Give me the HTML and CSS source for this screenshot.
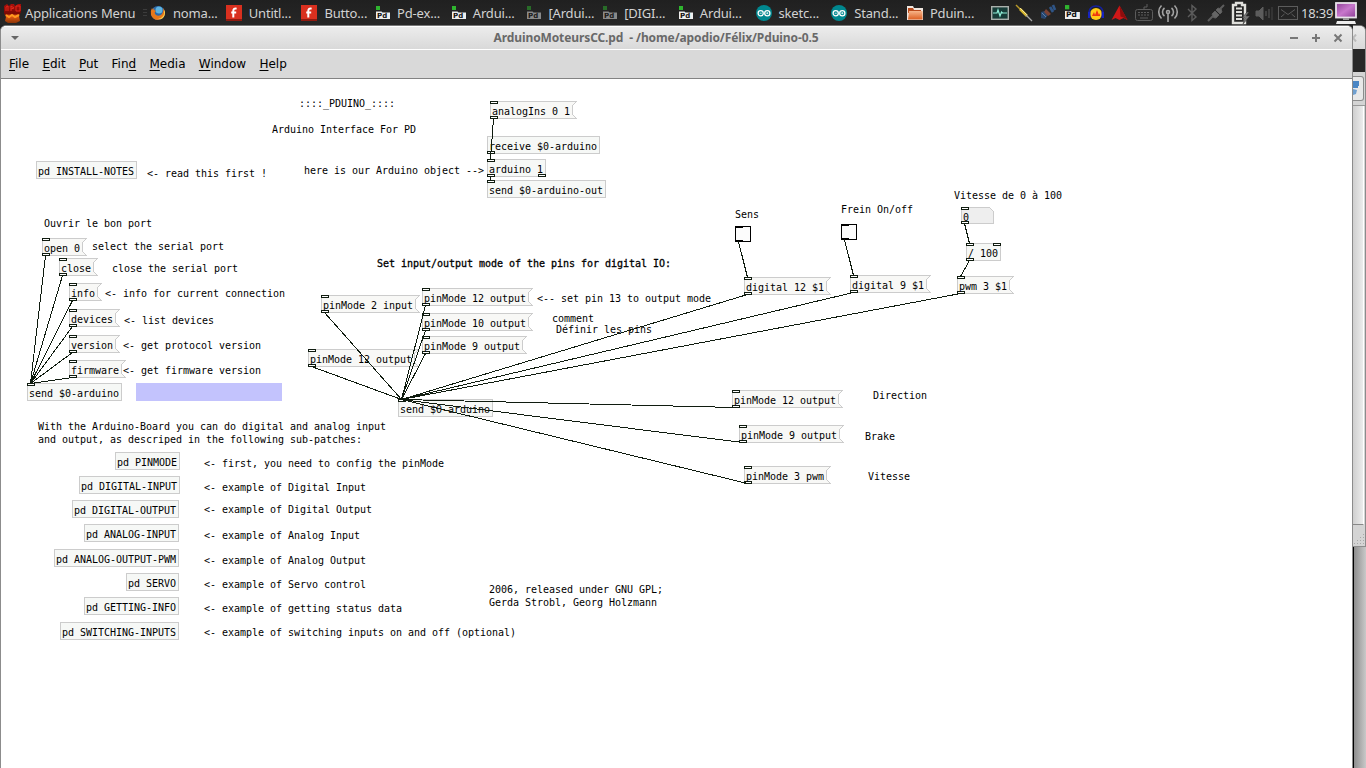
FILE: index.html
```html
<!DOCTYPE html>
<html lang="fr">
<head>
<meta charset="utf-8">
<title>ArduinoMoteursCC.pd</title>
<link rel="stylesheet" href="styles.css">
</head>
<body>
<svg class="defs" width="0" height="0" aria-hidden="true">
  <defs>
    <linearGradient id="screen-fill" x1="0" y1="0" x2="1" y2="1"><stop offset="0" stop-color="#8e3f96"/><stop offset=".5" stop-color="#c878cc"/><stop offset="1" stop-color="#8b3d95"/></linearGradient>
    <linearGradient id="folder-fill" x1="0" y1="0" x2="0" y2="1"><stop offset="0" stop-color="#f7b58a"/><stop offset="1" stop-color="#dd5f22"/></linearGradient>
    <linearGradient id="flame" x1="0" y1="0" x2="0" y2="1"><stop offset="0" stop-color="#a80f0a"/><stop offset=".5" stop-color="#7c0a05"/><stop offset=".65" stop-color="#e85a10"/><stop offset="1" stop-color="#8a3508"/></linearGradient>
    <symbol id="i-fritz" viewBox="0 0 16 16"><rect width="16" height="16" fill="#d9301f"/><rect y="14" width="16" height="2" fill="#8f1a10"/><path d="M10.600 3.800Q7.300 2.800 7.300 6v6.600M5.200 7.600h5" fill="none" stroke="#fff" stroke-width="2"/></symbol>
    <symbol id="i-pd" viewBox="0 0 16 16"><rect x="0" y="1" width="4" height="4" fill="#2fb52f"/><path d="M0 6.500h5.500l1 1H14V14H0z" fill="#eee"/><text x="1" y="12.600" class="pd-mark">Pd</text></symbol>
    <symbol id="i-arduino" viewBox="0 0 16 16"><circle cx="8" cy="8" r="8" fill="#00878f"/><circle cx="4.700" cy="8.200" r="2.600" fill="none" stroke="#fff" stroke-width="1.300"/><circle cx="11.300" cy="8.200" r="2.600" fill="none" stroke="#fff" stroke-width="1.300"/><path d="M3.700 8.200h2M10.300 8.200h2M11.300 7.200v2" stroke="#fff" stroke-width=".8"/></symbol>
    <symbol id="i-folder" viewBox="0 0 16 16"><path d="M0 1h6l1 2h9v12H0z" fill="#efe6df"/><path d="M1 3h5l1 2h7v3H1z" fill="#b94a1c"/><path d="M2 6h13.500v8.500H1z" fill="url(#folder-fill)"/></symbol>
  </defs>
</svg>

<header class="panel">
  <div class="app-menu">
    <svg width="20" height="20" viewBox="0 0 20 20"><path d="M1 10V3l3-2 2 2 2-2h3l1 2 3-2h3v8l-2 4 1 5-4 2H5l-3-2 1-4z" fill="url(#flame)"/><path d="M3 8V4l2-1v5M8 8V3l3 2-3 1M13 3v5h4V3z" fill="none" stroke="#e0281a"/><path d="M3 12l3 2 3-2 3 2 4-2" fill="none" stroke="#ff9a20" stroke-width="2"/></svg>
    <span class="app-label">Applications Menu</span>
    <span class="grip"></span>
  </div>
  <nav class="tasks">
    <div class="task"><svg width="16" height="16" viewBox="0 0 16 16"><circle cx="8" cy="8" r="7" fill="#2c68a8"/><circle cx="9" cy="5" r="3.500" fill="#5db3e0"/><path d="M2 3Q0 6 1 10q2 5 7 5 6-1 7-7 0-3-2-5 1 4-2 7-4 2-6-1-1-2 1-3Q4 6 4 3L3 5z" fill="#e8781a"/><path d="M14 5q1 8-6 9 7 1 7-7z" fill="#ffd24a"/></svg><span>noma...</span></div>
    <div class="task"><svg width="16" height="16"><use href="#i-fritz"/></svg><span>Untitl...</span></div>
    <div class="task"><svg width="16" height="16"><use href="#i-fritz"/></svg><span>Butto...</span></div>
    <div class="task pd-task"><svg width="16" height="16"><use href="#i-pd"/></svg><span>Pd-ex...</span></div>
    <div class="task pd-task"><svg width="16" height="16"><use href="#i-pd"/></svg><span>Ardui...</span></div>
    <div class="task pd-task"><svg class="dim" width="16" height="16"><use href="#i-pd"/></svg><span>[Ardui...</span></div>
    <div class="task pd-task"><svg class="dim" width="16" height="16"><use href="#i-pd"/></svg><span>[DIGI...</span></div>
    <div class="task pd-task"><svg width="16" height="16"><use href="#i-pd"/></svg><span>Ardui...</span></div>
    <div class="task"><svg width="16" height="16"><use href="#i-arduino"/></svg><span>sketc...</span></div>
    <div class="task"><svg width="16" height="16"><use href="#i-arduino"/></svg><span>Stand...</span></div>
    <div class="task"><svg width="16" height="16"><use href="#i-folder"/></svg><span>Pduin...</span></div>
  </nav>
  <div class="tray">
    <svg width="24" height="24" viewBox="0 0 24 24"><rect x="3.700" y="5.700" width="16.600" height="12.600" fill="#173c38" stroke="#aab0ac" stroke-width="1.400"/><path d="M5 12h4l1-3 2 6 1.500-4 1 1H19" fill="none" stroke="#8ff0d8" stroke-width="1.200"/></svg>
    <svg width="24" height="24" viewBox="0 0 24 24"><path d="M4 4l8 8" stroke="#b89a2a" stroke-width="1.500"/><path d="M8 8l7 7" stroke="#d9b830" stroke-width="2.600"/><path d="M8 7l7 7" stroke="#fff3b0" stroke-width=".8"/><path d="M14 14l6 6" stroke="#aaa" stroke-width="1.300"/></svg>
    <svg width="24" height="24" viewBox="0 0 24 24"><path d="M5 11l4-1 3 4-3 4-4-1z" fill="#27466f"/><path d="M14 6l3 5M17 4l2 5" stroke="#2f5587" stroke-width="2.600"/><path d="M10 8l5 5-3 2-4-4z" fill="#7c4234"/><path d="M6 12l4 4" stroke="#5d7ea6"/></svg>
    <svg width="24" height="24" viewBox="0 0 24 24"><use href="#i-pd" x="5" y="3" width="17" height="17"/></svg>
    <svg width="24" height="24" viewBox="0 0 24 24"><circle cx="12" cy="13" r="6" fill="#ffcb18"/><path d="M8 15l2-4 1 3 2-5 2 5 1-2v3z" fill="#ee3610"/><path d="M5 15V11q1-6 7-6t7 6v4" fill="none" stroke="#1420a0" stroke-width="1.600"/><path d="M5.200 11v6M18.800 11v6" stroke="#1724c0" stroke-width="2.400"/></svg>
    <svg width="24" height="24" viewBox="0 0 24 24"><path d="M11.500 4.500L19.500 19l-4-2-4 2-4-2-4 2z" fill="#d01818"/><path d="M11.500 4.500l1 11 3 1 4 2.500z" fill="#8e0d0d"/></svg>
    <svg class="muted" width="24" height="24" viewBox="0 0 24 24"><rect x="3.500" y="8.500" width="17" height="11" rx="2"/><path d="M6 11.500h12M6 14h12" stroke-dasharray="2 1"/><path d="M8 17h8M12 8V6h3V3"/></svg>
    <svg class="lit" width="24" height="24" viewBox="0 0 24 24"><circle cx="12" cy="11" r="1.500"/><path d="M12 12v9M8.500 15a5 5 0 0 1 0-8M15.500 15a5 5 0 0 0 0-8M5.500 17.500a9 9 0 0 1 0-13M18.500 17.500a9 9 0 0 0 0-13"/></svg>
    <svg class="muted" width="24" height="24" viewBox="0 0 24 24"><path d="M8 8l8 8-4 3.500V4.500L16 8l-8 8" stroke-width="1.400"/></svg>
    <svg class="muted" width="24" height="24" viewBox="0 0 24 24"><path d="M4 20l5-5M16 8l4-4" stroke-width="2"/><path d="M8 13l3-3 4 4-3 3q-3 1-4-4zM12 9l2-2q4 0 4 4l-2 2z" fill="#666"/></svg>
    <svg width="24" height="24" viewBox="0 0 24 24"><path d="M5 4h3V2h6v2h3v18H5z" fill="none" stroke="#e0e0dc" stroke-width="2.400"/><path d="M8 7.500h6M8 11h6M8 14.500h6M8 18h6" stroke="#e0e0dc" stroke-width="2.200"/><path d="M19 11l-5 6h3l-2 6 7-8h-4l3-4z" fill="#777" stroke="#252525" stroke-width=".5"/></svg>
    <svg class="muted" width="24" height="24" viewBox="0 0 24 24"><path d="M4 10h3l4-4v13l-4-4H4z" fill="#5c5c5c"/><path d="M14 10v5M17 8v9" /><path d="M20 6v13" stroke="#444"/></svg>
    <svg class="muted" width="24" height="24" viewBox="0 0 24 24"><rect x="2.500" y="5.500" width="19" height="13"/><path d="M5 8.500l7 5 7-5M5 16l3.500-3M19 16l-3.500-3"/></svg>
    <span class="clock">18:39</span>
    <svg width="24" height="24" viewBox="0 0 24 24"><rect x="2" y="2" width="20" height="14.500" fill="url(#screen-fill)" stroke="#e9e3ea" stroke-width="1.800"/><path d="M9 17h6v2H9z" fill="#999"/><path d="M3 20h18l1 3H2z" fill="#eee"/></svg>
  </div>
</header>

<main class="desktop">
  <section class="window">
    <div class="titlebar">
      <svg class="shade" width="8" height="4" viewBox="0 0 8 4"><path d="M0 0h8L4 4z" fill="#666"/></svg>
      <h1 class="title">ArduinoMoteursCC.pd&nbsp; - /home/apodio/Félix/Pduino-0.5</h1>
      <svg class="controls" width="56" height="10" viewBox="0 0 56 10"><path d="M1 5h8M23 5h8M27 1v8" stroke="#777" stroke-width="2"/><path d="M45.500 1.500l7 7M52.500 1.500l-7 7" stroke="#777" stroke-width="2"/></svg>
    </div>
    <nav class="menubar">
      <span><u>F</u>ile</span><span><u>E</u>dit</span><span><u>P</u>ut</span><span>Fin<u>d</u></span><span><u>M</u>edia</span><span><u>W</u>indow</span><span><u>H</u>elp</span>
    </nav>
    <svg class="patch" width="1351" height="689" viewBox="1 79 1351 689">
      <rect x="136" y="383" width="146" height="18" fill="#c3c3fd"/>

      <!-- objects -->
      <g class="obj">
        <path d="M36.500 161.500h100v17h-100z"/>
        <path d="M487.500 136.500h112v17h-112z"/>
        <path d="M487.500 159.500h58v17h-58z"/>
        <path d="M487.500 180.500h118v17h-118z"/>
        <path d="M27.500 383.500h94v17h-94z"/>
        <path d="M398.500 399.500h94v17h-94z"/>
        <path d="M115.500 452.500h64v17h-64z"/>
        <path d="M79.500 476.500h100v17h-100z"/>
        <path d="M72.500 500.500h106v17h-106z"/>
        <path d="M84.500 524.500h94v17h-94z"/>
        <path d="M54.500 549.500h124v17h-124z"/>
        <path d="M126.500 573.500h52v17h-52z"/>
        <path d="M84.500 597.500h94v17h-94z"/>
        <path d="M60.500 622.500h118v17h-118z"/>
        <path d="M966.500 243.500h34v17h-34z"/>
      </g>
      <!-- messages -->
      <g class="msg">
        <path d="M490.500 101.500h86l-4 4v9l4 4h-86z"/>
        <path d="M42.500 238.500h44l-4 4v9l4 4h-44z"/>
        <path d="M59.500 258.500h38l-4 4v9l4 4h-38z"/>
        <path d="M69.500 283.500h32l-4 4v9l4 4h-32z"/>
        <path d="M69.500 309.500h50l-4 4v9l4 4h-50z"/>
        <path d="M69.500 335.500h50l-4 4v9l4 4h-50z"/>
        <path d="M69.500 360.500h56l-4 4v9l4 4h-56z"/>
        <path d="M321.500 295.500h98l-4 4v9l4 4h-98z"/>
        <path d="M308.500 349.500h110l-4 4v9l4 4h-110z"/>
        <path d="M422.500 288.500h110l-4 4v9l4 4h-110z"/>
        <path d="M422.500 313.500h110l-4 4v9l4 4h-110z"/>
        <path d="M422.500 336.500h104l-4 4v9l4 4h-104z"/>
        <path d="M744.500 277.500h86l-4 4v9l4 4h-86z"/>
        <path d="M850.500 275.500h80l-4 4v9l4 4h-80z"/>
        <path d="M957.500 276.500h56l-4 4v9l4 4h-56z"/>
        <path d="M732.500 390.500h110l-4 4v9l4 4h-110z"/>
        <path d="M739.500 425.500h104l-4 4v9l4 4h-104z"/>
        <path d="M744.500 466.500h86l-4 4v9l4 4h-86z"/>
      </g>
      <path class="num" d="M961.500 207.500h28l4 4v12h-32z"/>
      <g class="toggle">
        <rect x="735.500" y="226.500" width="15" height="15"/><path d="M736 227.500h7M736 240.500h7"/>
        <rect x="841.500" y="224.500" width="15" height="15"/><path d="M842 225.500h7M842 238.500h7"/>
      </g>

      <!-- inlets and outlets -->
      <g class="ports">
        <path d="M490.500 101.500h7v2h-7zM490.500 116.500h7v2h-7zM487.500 151.500h7v2h-7zM487.500 159.500h7v2h-7zM487.500 174.500h7v2h-7zM538.500 174.500h7v2h-7zM487.500 180.500h7v2h-7z"/>
        <path d="M42.500 238.500h7v2h-7zM42.500 253.500h7v2h-7zM59.500 258.500h7v2h-7zM59.500 273.500h7v2h-7zM69.500 283.500h7v2h-7zM69.500 298.500h7v2h-7zM69.500 309.500h7v2h-7zM69.500 324.500h7v2h-7zM69.500 335.500h7v2h-7zM69.500 350.500h7v2h-7zM69.500 360.500h7v2h-7zM69.500 375.500h7v2h-7zM27.500 383.500h7v2h-7z"/>
        <path d="M321.500 295.500h7v2h-7zM321.500 310.500h7v2h-7zM308.500 349.500h7v2h-7zM308.500 364.500h7v2h-7zM422.500 288.500h7v2h-7zM422.500 303.500h7v2h-7zM422.500 313.500h7v2h-7zM422.500 328.500h7v2h-7zM422.500 336.500h7v2h-7zM422.500 351.500h7v2h-7zM398.500 399.500h7v2h-7z"/>
        <path d="M744.500 277.500h7v2h-7zM744.500 292.500h7v2h-7zM850.500 275.500h7v2h-7zM850.500 290.500h7v2h-7zM957.500 276.500h7v2h-7zM957.500 291.500h7v2h-7zM961.500 207.500h7v2h-7zM961.500 221.500h7v2h-7zM966.500 243.500h7v2h-7zM993.500 243.500h7v2h-7zM966.500 258.500h7v2h-7z"/>
        <path d="M732.500 390.500h7v2h-7zM732.500 405.500h7v2h-7zM739.500 425.500h7v2h-7zM739.500 440.500h7v2h-7zM744.500 466.500h7v2h-7zM744.500 481.500h7v2h-7z"/>
      </g>

      <g class="label">
        <text x="299" y="107">::::_PDUINO_::::</text>
        <text x="272" y="133">Arduino Interface For PD</text>
        <text x="492" y="115">analogIns 0 1</text>
        <text x="489" y="150">receive $0-arduino</text>
        <text x="489" y="173">arduino 1</text>
        <text x="489" y="194">send $0-arduino-out</text>
        <text x="304" y="174">here is our Arduino object --&gt;</text>
        <text x="38" y="175">pd INSTALL-NOTES</text>
        <text x="147" y="177">&lt;- read this first !</text>
        <text x="44" y="227">Ouvrir le bon port</text>
        <text x="44" y="252">open 0</text>
        <text x="92" y="250">select the serial port</text>
        <text x="61" y="272">close</text>
        <text x="112" y="272">close the serial port</text>
        <text x="71" y="297">info</text>
        <text x="105" y="297">&lt;- info for current connection</text>
        <text x="71" y="323">devices</text>
        <text x="124" y="324">&lt;- list devices</text>
        <text x="71" y="349">version</text>
        <text x="123" y="349">&lt;- get protocol version</text>
        <text x="71" y="374">firmware</text>
        <text x="123" y="374">&lt;- get firmware version</text>
        <text x="29" y="397">send $0-arduino</text>
        <text x="377" y="267" class="heavy">Set input/output mode of the pins for digital IO:</text>
        <text x="323" y="309">pinMode 2 input</text>
        <text x="424" y="302">pinMode 12 output</text>
        <text x="424" y="327">pinMode 10 output</text>
        <text x="424" y="350">pinMode 9 output</text>
        <text x="310" y="363">pinMode 12 output</text>
        <text x="537" y="302">&lt;-- set pin 13 to output mode</text>
        <text x="552" y="322">comment</text>
        <text x="556" y="333">Définir les pins</text>
        <text x="400" y="413">send $0-arduino</text>
        <text x="735" y="218">Sens</text>
        <text x="841" y="213">Frein On/off</text>
        <text x="954" y="199">Vitesse de 0 à 100</text>
        <text x="963" y="221">0</text>
        <text x="968" y="257">/ 100</text>
        <text x="746" y="291">digital 12 $1</text>
        <text x="852" y="289">digital 9 $1</text>
        <text x="959" y="290">pwm 3 $1</text>
        <text x="734" y="404">pinMode 12 output</text>
        <text x="741" y="439">pinMode 9 output</text>
        <text x="746" y="480">pinMode 3 pwm</text>
        <text x="873" y="399">Direction</text>
        <text x="865" y="440">Brake</text>
        <text x="868" y="480">Vitesse</text>
        <text x="38" y="430">With the Arduino-Board you can do digital and analog input</text>
        <text x="38" y="443">and output, as descriped in the following sub-patches:</text>
        <text x="117" y="466">pd PINMODE</text>
        <text x="81" y="490">pd DIGITAL-INPUT</text>
        <text x="74" y="514">pd DIGITAL-OUTPUT</text>
        <text x="86" y="538">pd ANALOG-INPUT</text>
        <text x="56" y="563">pd ANALOG-OUTPUT-PWM</text>
        <text x="128" y="587">pd SERVO</text>
        <text x="86" y="611">pd GETTING-INFO</text>
        <text x="62" y="636">pd SWITCHING-INPUTS</text>
        <text x="204" y="467">&lt;- first, you need to config the pinMode</text>
        <text x="204" y="491">&lt;- example of Digital Input</text>
        <text x="204" y="513">&lt;- example of Digital Output</text>
        <text x="204" y="539">&lt;- example of Analog Input</text>
        <text x="204" y="564">&lt;- example of Analog Output</text>
        <text x="204" y="588">&lt;- example of Servo control</text>
        <text x="204" y="612">&lt;- example of getting status data</text>
        <text x="204" y="636">&lt;- example of switching inputs on and off (optional)</text>
        <text x="489" y="593">2006, released under GNU GPL;</text>
        <text x="489" y="606">Gerda Strobl, Georg Holzmann</text>
      </g>

      <!-- patch cords -->
      <g class="wires">
        <path d="M493.500 118.500L490.500 159.500M490.500 153.500v6M490.500 176.500v4"/>
        <path d="M45.500 255.500L30.500 383.500M62.500 275.500L30.500 383.500M72.500 300.500L30.500 383.500M72.500 326.500L30.500 383.500M72.500 352.500L30.500 383.500M72.500 377.500L30.500 383.500"/>
        <path d="M324.500 312.500L401.500 399.500M311.500 366.500L401.500 399.500M425.500 305.500L401.500 399.500M425.500 330.500L401.500 399.500M425.500 353.500L401.500 399.500"/>
        <path d="M747.500 294.500L401.500 399.500M853.500 292.500L401.500 399.500M960.500 293.500L401.500 399.500M735.500 407.500L401.500 399.500M742.500 442.500L401.500 399.500M747.500 483.500L401.500 399.500"/>
        <path d="M738.500 241.500L747.500 277.500M844.500 239.500L853.500 275.500M964.500 223.500L969.500 243.500M969.500 260.500L960.500 276.500"/>
      </g>
    </svg>
  </section>
  <aside class="behind">
    <div class="back-window">
      <div class="back-title"><svg width="5" height="8" viewBox="0 0 5 8"><path d="M-3 0.500l6 7M3 .5l-6 7" stroke="#bbb" stroke-width="2"/></svg></div>
      <div class="back-menu"></div>
      <div class="back-tools"><div class="back-button"><svg width="8" height="16" viewBox="0 0 8 16"><path d="M0 0h6v5H5v2H0z" fill="#4a86c4"/><path d="M0 8l4 1-1 4-3 1z" fill="#6fa0d0"/></svg></div></div>
      <div class="back-body"></div>
      <div class="back-status"><svg width="12" height="12" viewBox="0 0 12 12"><path d="M10 1.500h1M7 4.500h4M4 7.500h7M1 10.500h10" stroke="#a8a8a8" stroke-dasharray="1 2"/></svg></div>
    </div>
    <div class="wallpaper"></div>
  </aside>
</main>
</body>
</html>
```

FILE: styles.css
```css
* { box-sizing: border-box; }

body {
  margin: 0;
  width: 1366px;
  height: 768px;
  overflow: hidden;
  display: flex;
  flex-direction: column;
  background: #232323;
  font-family: "Noto Sans", "Open Sans", sans-serif;
}

svg { display: block; flex: none; }
.defs { position: absolute; }

/* top panel */
.panel {
  height: 25px;
  flex: none;
  display: flex;
  align-items: center;
  background: linear-gradient(#202020, #272727);
  color: #d2d2d2;
  font-size: 13px;
  line-height: 24px;
  letter-spacing: -0.170px;
  white-space: nowrap;
}
.app-menu { width: 150px; padding-left: 3px; display: flex; align-items: center; gap: 2px; }
.app-label { width: 116px; }
.grip { width: 4px; height: 8px; background: repeating-linear-gradient(#3c3c3c 0 1px, transparent 1px 3px); }
.tasks { display: flex; width: 838px; }
.task { width: 75.700px; display: flex; align-items: center; gap: 7px; }
.pd-task { gap: 5px; }
.pd-task svg { margin-left: -1px; }
.dim { opacity: .5; }
.pd-mark { font: bold 7px "DejaVu Sans", sans-serif; letter-spacing: 0; fill: #111; }
.tray { display: flex; align-items: center; }
.clock { width: 33px; margin-left: 1px; color: #d8d8d8; }
.muted { fill: none; stroke: #5c5c5c; }
.lit { fill: none; stroke: #a4a4a4; stroke-width: 1.600; }

/* windows */
.desktop { flex: 1; display: flex; min-height: 0; }
.window {
  width: 1353px;
  display: flex;
  flex-direction: column;
  border: 1px solid #8c8c8c;
  border-bottom: 0;
  border-top-color: #777;
  border-radius: 6px 6px 0 0;
  background: #fff;
  overflow: hidden;
}
.titlebar {
  height: 24px;
  flex: none;
  display: flex;
  align-items: center;
  padding: 0 7px 0 10px;
  border-top: 1px solid #fff;
  border-bottom: 1px solid #fff;
  background: linear-gradient(#ececec, #d9d9d9);
}
.title {
  flex: 1;
  margin: 0;
  padding-right: 0;
  text-align: center;
  font-size: 12px;
  line-height: 22px;
  letter-spacing: -0.110px;
  color: #696969;
  white-space: nowrap;
}
.titlebar .title { padding-left: 4px; }
.menubar {
  height: 29px;
  flex: none;
  display: flex;
  gap: 13.300px;
  padding-left: 8px;
  border-bottom: 1px solid #838383;
  background: #d9d9d9;
  font: 12px/29px "DejaVu Sans", sans-serif;
  color: #000;
}
.menubar u { text-underline-offset: 2px; }

/* patch canvas */
.patch { background: #fff; }
.obj, .msg, .num { stroke: #ccc; fill: #f6f8f6; shape-rendering: crispEdges; }
.msg { fill: #f8f8f6; }
.num { fill: #eee; }
.toggle { fill: #fcfcfc; stroke: #000; shape-rendering: crispEdges; }
.ports { fill: #fff; stroke: #101c10; shape-rendering: crispEdges; }
.wires { fill: none; stroke: #101c10; shape-rendering: crispEdges; }
.label {
  font: 10px "DejaVu Sans Mono", monospace;
  fill: #000;
  letter-spacing: -0.020px;
  white-space: pre;
}
.heavy { stroke: #000; stroke-width: .3px; }

/* window behind and the desktop below it */
.behind { flex: 1; display: flex; flex-direction: column; }
.back-window {
  height: 522px;
  display: flex;
  flex-direction: column;
  border-top: 1px solid #777;
  border-right: 1px solid #8c8c8c;
  border-bottom: 1px solid #8c8c8c;
  border-radius: 0 6px 0 0;
  background: #d4d4d4;
}
.back-title { height: 23px; padding-top: 8px; background: linear-gradient(#ececec, #d9d9d9); border-radius: 0 5px 0 0; }
.back-menu { height: 23px; background: #282828; }
.back-tools { height: 34px; padding: 4px 1px 0 0; border-bottom: 1px solid #999; }
.back-button { height: 25px; padding-top: 4px; border: 1px solid #8c8c8c; border-left: 0; border-radius: 0 3px 3px 0; background: #e8e8e8; }
.back-body { flex: 1; margin-right: 1px; border-right: 1px solid #fff; border-bottom: 1px solid #888; background: linear-gradient(90deg, #cfcfcf, #ececec); }
.back-status { height: 21px; display: flex; align-items: flex-end; padding-bottom: 1px; }
.wallpaper { flex: 1; border-left: 1px solid #000; background: linear-gradient(90deg, #8d8d8d, #c9c9c9); }
```
